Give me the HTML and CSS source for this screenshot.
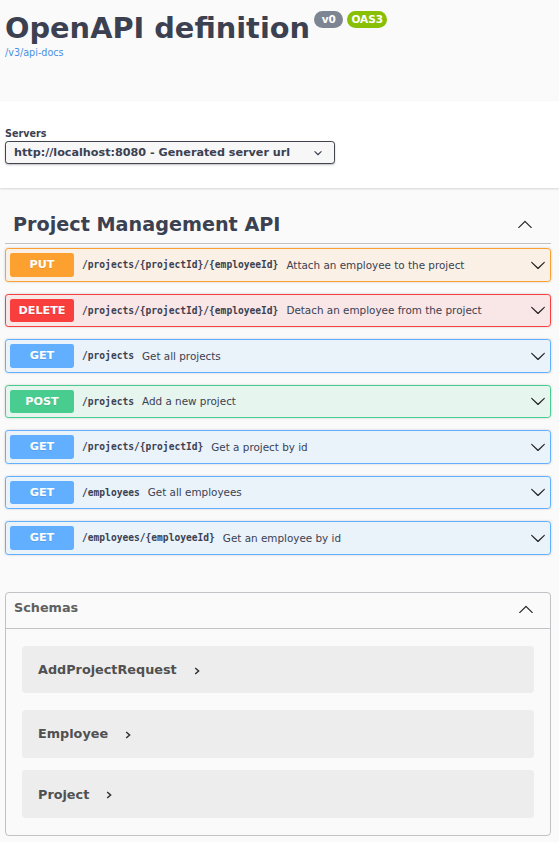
FILE: index.html
```html
<!DOCTYPE html>
<html lang="en">
<head>
<meta charset="utf-8">
<title>Swagger UI</title>
<link rel="stylesheet" href="styles.css">
</head>
<body>
<div class="info">
  <div class="title-row">
    <h2 class="title">OpenAPI definition</h2>
    <span class="stamp stamp-version">v0</span>
    <span class="stamp stamp-oas">OAS3</span>
  </div>
  <a class="url" href="#">/v3/api-docs</a>
</div>

<div class="scheme">
  <div class="servers-title">Servers</div>
  <div class="select">
    <span>http://localhost:8080 - Generated server url</span>
    <svg class="select-arrow" viewBox="0 0 20 20"><path d="M13.418 7.859a.695.695 0 01.978 0 .68.68 0 010 .969l-3.908 3.83a.697.697 0 01-.979 0l-3.908-3.830a.68.68 0 010-.969.695.695 0 01.978 0L10 11l3.418-3.141z"/></svg>
  </div>
</div>

<div class="wrapper">
  <section class="tag-section">
    <h3 class="tag">
      <span class="tag-name">Project Management API</span>
      <svg class="tag-arrow" viewBox="0 0 20 20"><path d="M17.418 14.908c.272.268.709.268.979 0s.271-.701 0-.969l-7.908-7.83c-.27-.268-.707-.268-.979 0l-7.908 7.83c-.27.268-.27.701 0 .969.271.268.709.268.979 0L10 7.75l7.418 7.158z"/></svg>
    </h3>

    <div class="op op-put">
      <span class="method">PUT</span>
      <span class="path">/projects/{projectId}/{employeeId}</span>
      <span class="desc">Attach an employee to the project</span>
      <svg class="op-arrow" viewBox="0 0 20 20"><path d="M17.418 6.109c.272-.268.709-.268.979 0s.271.701 0 .969l-7.908 7.83c-.27.268-.707.268-.979 0l-7.908-7.83c-.27-.268-.27-.701 0-.969.271-.268.709-.268.979 0L10 13.25l7.418-7.141z"/></svg>
    </div>

    <div class="op op-delete">
      <span class="method">DELETE</span>
      <span class="path">/projects/{projectId}/{employeeId}</span>
      <span class="desc">Detach an employee from the project</span>
      <svg class="op-arrow" viewBox="0 0 20 20"><path d="M17.418 6.109c.272-.268.709-.268.979 0s.271.701 0 .969l-7.908 7.83c-.27.268-.707.268-.979 0l-7.908-7.83c-.27-.268-.27-.701 0-.969.271-.268.709-.268.979 0L10 13.25l7.418-7.141z"/></svg>
    </div>

    <div class="op op-get">
      <span class="method">GET</span>
      <span class="path">/projects</span>
      <span class="desc">Get all projects</span>
      <svg class="op-arrow" viewBox="0 0 20 20"><path d="M17.418 6.109c.272-.268.709-.268.979 0s.271.701 0 .969l-7.908 7.83c-.27.268-.707.268-.979 0l-7.908-7.83c-.27-.268-.27-.701 0-.969.271-.268.709-.268.979 0L10 13.25l7.418-7.141z"/></svg>
    </div>

    <div class="op op-post">
      <span class="method">POST</span>
      <span class="path">/projects</span>
      <span class="desc">Add a new project</span>
      <svg class="op-arrow" viewBox="0 0 20 20"><path d="M17.418 6.109c.272-.268.709-.268.979 0s.271.701 0 .969l-7.908 7.83c-.27.268-.707.268-.979 0l-7.908-7.83c-.27-.268-.27-.701 0-.969.271-.268.709-.268.979 0L10 13.25l7.418-7.141z"/></svg>
    </div>

    <div class="op op-get">
      <span class="method">GET</span>
      <span class="path">/projects/{projectId}</span>
      <span class="desc">Get a project by id</span>
      <svg class="op-arrow" viewBox="0 0 20 20"><path d="M17.418 6.109c.272-.268.709-.268.979 0s.271.701 0 .969l-7.908 7.83c-.27.268-.707.268-.979 0l-7.908-7.83c-.27-.268-.27-.701 0-.969.271-.268.709-.268.979 0L10 13.25l7.418-7.141z"/></svg>
    </div>

    <div class="op op-get">
      <span class="method">GET</span>
      <span class="path">/employees</span>
      <span class="desc">Get all employees</span>
      <svg class="op-arrow" viewBox="0 0 20 20"><path d="M17.418 6.109c.272-.268.709-.268.979 0s.271.701 0 .969l-7.908 7.83c-.27.268-.707.268-.979 0l-7.908-7.83c-.27-.268-.27-.701 0-.969.271-.268.709-.268.979 0L10 13.25l7.418-7.141z"/></svg>
    </div>

    <div class="op op-get">
      <span class="method">GET</span>
      <span class="path">/employees/{employeeId}</span>
      <span class="desc">Get an employee by id</span>
      <svg class="op-arrow" viewBox="0 0 20 20"><path d="M17.418 6.109c.272-.268.709-.268.979 0s.271.701 0 .969l-7.908 7.83c-.27.268-.707.268-.979 0l-7.908-7.83c-.27-.268-.27-.701 0-.969.271-.268.709-.268.979 0L10 13.25l7.418-7.141z"/></svg>
    </div>
  </section>

  <section class="models">
    <h4 class="models-head">
      <span class="models-title">Schemas</span>
      <svg class="models-arrow" viewBox="0 0 20 20"><path d="M17.418 14.908c.272.268.709.268.979 0s.271-.701 0-.969l-7.908-7.83c-.27-.268-.707-.268-.979 0l-7.908 7.83c-.27.268-.27.701 0 .969.271.268.709.268.979 0L10 7.75l7.418 7.158z"/></svg>
    </h4>
    <div class="models-body">
      <div class="model">
        <span class="model-title">AddProjectRequest</span>
        <svg class="model-toggle" viewBox="0 0 6 8"><path d="M1.2 1 L4.6 4 L1.2 7"/></svg>
      </div>
      <div class="model">
        <span class="model-title">Employee</span>
        <svg class="model-toggle" viewBox="0 0 6 8"><path d="M1.2 1 L4.6 4 L1.2 7"/></svg>
      </div>
      <div class="model">
        <span class="model-title">Project</span>
        <svg class="model-toggle" viewBox="0 0 6 8"><path d="M1.2 1 L4.6 4 L1.2 7"/></svg>
      </div>
    </div>
  </section>
</div>
</body>
</html>
```

FILE: styles.css
```css
* {
  box-sizing: border-box;
}

html,
body {
  margin: 0;
  padding: 0;
}

body {
  background: #fafafa;
  color: #3b4151;
  font-family: "DejaVu Sans", "Liberation Sans", sans-serif;
}

/* ---------- info ---------- */
.info {
  height: 101px;
  padding: 8px 8px 0 5px;
}

.title-row {
  display: flex;
  align-items: flex-start;
}

.title {
  margin: 0;
  padding-top: 3px;
  font-size: 28.8px;
  line-height: 34px;
  font-weight: 700;
  color: #3b4151;
}

.stamp {
  margin-top: 3px;
  margin-left: 4px;
  height: 17px;
  line-height: 17px;
  border-radius: 46px;
  font-size: 10.5px;
  font-weight: 700;
  color: #fff;
  white-space: pre;
}

.stamp-version {
  background: #7d8492;
  padding: 0 7.6px;
}

.stamp-oas {
  background: #89bf04;
  padding: 0 4px;
}

.url {
  display: block;
  margin-top: 2.4px;
  font-size: 9.6px;
  line-height: 11px;
  color: #4990e2;
  text-decoration: none;
}

/* ---------- servers ---------- */
.scheme {
  background: #fff;
  box-shadow: 0 1px 2px 0 rgba(0, 0, 0, 0.15);
  padding: 27px 8px 24px 5px;
  margin-bottom: 16px;
}

.servers-title {
  font-size: 9.6px;
  line-height: 11px;
  font-weight: 700;
  color: #3b4151;
}

.select {
  margin-top: 2px;
  width: 330px;
  height: 23px;
  display: flex;
  align-items: center;
  justify-content: space-between;
  padding: 0 8px;
  border: 1.6px solid #41444e;
  border-radius: 3.2px;
  background: #f7f7f7;
  box-shadow: 0 1px 2px 0 rgba(0, 0, 0, 0.25);
  font-size: 11.2px;
  font-weight: 700;
  color: #3b4151;
  white-space: nowrap;
}

.select-arrow {
  width: 16px;
  height: 16px;
  flex: none;
  fill: #3b4151;
}

/* ---------- tag section ---------- */
.wrapper {
  padding: 0 8px 0 5px;
}

.tag-section {
  display: flex;
  flex-direction: column;
}

.tag {
  display: flex;
  align-items: flex-start;
  justify-content: space-between;
  margin: 0 0 4px;
  padding: 9px 18.5px 7px 8px;
  border-bottom: 1px solid rgba(59, 65, 81, 0.3);
  font-size: 19.2px;
  line-height: 23px;
  font-weight: 700;
  color: #3b4151;
}

.tag-arrow {
  width: 16px;
  height: 16px;
  margin-top: 2.5px;
  flex: none;
  fill: #222;
}

.op {
  display: flex;
  align-items: center;
  padding: 4px;
  margin-bottom: 12px;
  border: 1px solid;
  border-radius: 3.2px;
  box-shadow: 0 0 2.4px rgba(0, 0, 0, 0.19);
}

.method {
  flex: none;
  width: 64px;
  height: 23.5px;
  line-height: 23.5px;
  border-radius: 2.4px;
  text-align: center;
  font-size: 11.2px;
  font-weight: 700;
  color: #fff;
  text-shadow: 0 1px 0 rgba(0, 0, 0, 0.1);
}

.path {
  flex: none;
  padding: 0 8px;
  font-family: "DejaVu Sans Mono", "Liberation Mono", monospace;
  font-size: 9.6px;
  font-weight: 700;
  color: #3b4151;
}

.desc {
  flex: 1 1 auto;
  font-size: 10.4px;
  color: #3b4151;
}

.op-arrow {
  width: 16px;
  height: 16px;
  flex: none;
  fill: #222;
}

.op-put {
  background: rgba(252, 161, 48, 0.1);
  border-color: #fca130;
}

.op-put .method {
  background: #fca130;
}

.op-delete {
  background: rgba(249, 62, 62, 0.1);
  border-color: #f93e3e;
}

.op-delete .method {
  background: #f93e3e;
}

.op-get {
  background: rgba(97, 175, 254, 0.1);
  border-color: #61affe;
}

.op-get .method {
  background: #61affe;
}

.op-post {
  background: rgba(73, 204, 144, 0.1);
  border-color: #49cc90;
}

.op-post .method {
  background: #49cc90;
}

/* ---------- models ---------- */
.models {
  margin-top: 25px;
  border: 1px solid rgba(59, 65, 81, 0.3);
  border-radius: 4px;
}

.models-head {
  display: flex;
  align-items: center;
  justify-content: space-between;
  height: 36.3px;
  margin: 0;
  padding: 0 16px 0 8px;
  border-bottom: 1px solid rgba(59, 65, 81, 0.3);
  font-size: 12.8px;
  font-weight: 700;
  color: #606060;
}

.models-title {
  padding-bottom: 4.6px;
}

.models-arrow {
  width: 16px;
  height: 16px;
  margin-bottom: 3px;
  flex: none;
  fill: #222;
}

.models-body {
  padding: 17px 16px 17px;
  display: flex;
  flex-direction: column;
}

.model {
  display: flex;
  align-items: center;
  height: 47.7px;
  padding-left: 16px;
  margin-bottom: 12.5px;
  border-radius: 4px;
  background: rgba(0, 0, 0, 0.05);
}

.model:first-child {
  margin-bottom: 16.5px;
}

.model:last-child {
  margin-bottom: 0;
}

.model-title {
  font-size: 12.8px;
  font-weight: 700;
  color: #505050;
}

.model-toggle {
  width: 6px;
  height: 8px;
  margin-left: 17px;
  margin-top: 2px;
  flex: none;
  fill: none;
  stroke: #333;
  stroke-width: 1.5;
}
```
